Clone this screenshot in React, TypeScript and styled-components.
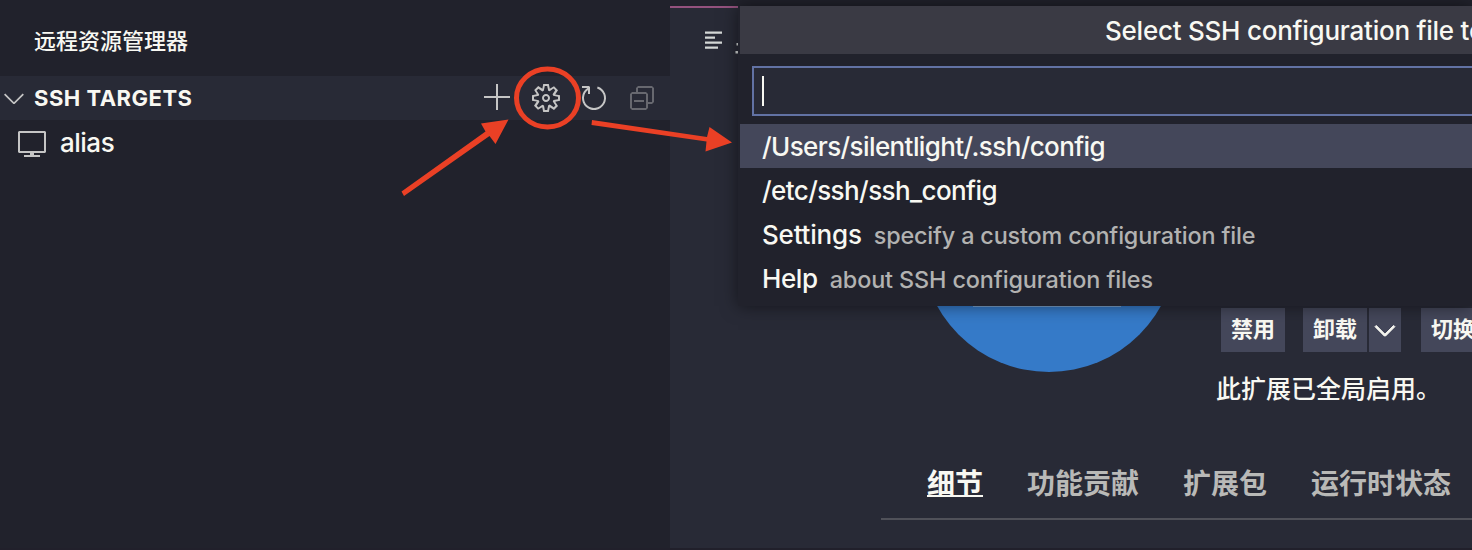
import React from "react";
import styled, { createGlobalStyle } from "styled-components";
import { VscAdd, VscGear, VscRefresh, VscCollapseAll, VscChevronDown, VscVm } from "react-icons/vsc";

const GlobalStyle = createGlobalStyle`
  * { box-sizing: border-box; }
  body {
    margin: 0;
    overflow: hidden;
    background: #282a36;
    color: #f8f8f2;
    font-family: Inter, "Noto Sans CJK SC", sans-serif;
    font-size: 26px;
    font-weight: 450;
  }
`;

const Window = styled.div`
  position: relative;
  display: flex;
  width: 1472px;
  height: 550px;
  overflow: hidden;
  border-bottom: 2px solid #21202b;
`;

const Sidebar = styled.aside`
  display: flex;
  flex-direction: column;
  flex: 0 0 670px;
  background: #21222c;
`;

const ViewTitle = styled.div`
  height: 76px;
  padding: 6px 0 0 34px;
  font-size: 22px;
  font-weight: 500;
  line-height: 70px;
`;

const SectionHeader = styled.div`
  display: flex;
  align-items: center;
  height: 44px;
  padding-right: 12px;
  background: #282a36;
`;

const Twistie = styled.span`
  display: flex;
  margin-left: -2px;
  width: 36px;
  color: #c5c5c5;
`;

const SectionTitle = styled.span`
  flex: 1;
  font-size: 22px;
  font-weight: 700;
  letter-spacing: 0.5px;
`;

const Actions = styled.div`
  display: flex;
  gap: 16px;
  color: #c5c5c5;
`;

const Action = styled.span<{ $dim?: boolean }>`
  display: flex;
  opacity: ${(p) => (p.$dim ? 0.4 : 1)};
`;

const TreeRow = styled.div`
  display: flex;
  align-items: center;
  gap: 12px;
  height: 44px;
  padding: 1px 0 0 16px;
  color: #f8f8f2;
  svg { color: #c5c5c5; }
`;

const Label = styled.span<{ $spacing?: number }>`
  letter-spacing: ${(p) => p.$spacing ?? 0}px;
  white-space: pre;
`;

const Editor = styled.main`
  display: flex;
  flex-direction: column;
  flex: 1;
  min-width: 0;
`;

const TabBar = styled.div`
  height: 116px;
  border-top: 6px solid #21222c;
`;

const ActiveTab = styled.div`
  height: 76px;
  border-top: 2px solid #94527e;
  padding: 22px 0 0 34px;
`;

const Extension = styled.section`
  display: flex;
  height: 318px;
  padding-left: 251px;
`;

const Logo = styled.div`
  display: flex;
  flex-shrink: 0;
  justify-content: center;
  width: 256px;
  height: 256px;
  border-radius: 50%;
  background: #357ac8;
`;

const LogoMark = styled.div`
  width: 148px;
  height: 191px;
  margin-right: 4px;
  border-bottom: 1px solid #7ba3cf;
`;

const Info = styled.div`
  display: flex;
  flex-direction: column;
  flex: 1;
  min-width: 0;
  padding-top: 192px;
  margin-left: 39px;
`;

const Buttons = styled.div`
  display: flex;
  padding-left: 5px;
`;

const Button = styled.div<{ $width: number; $gap?: number }>`
  flex: 0 0 ${(p) => p.$width}px;
  padding-left: 10px;
  height: 44px;
  margin-right: ${(p) => p.$gap ?? 0}px;
  background: #44475a;
  font-size: 22px;
  font-weight: 700;
  line-height: 43px;
  white-space: nowrap;
`;

const DropButton = styled(Button)`
  display: flex;
  align-items: center;
  justify-content: center;
  padding: 0;
`;

const Status = styled.div`
  margin-top: 17px;
  font-size: 25px;
  font-weight: 500;
  line-height: 40px;
  white-space: nowrap;
`;

const NavBar = styled.nav`
  display: flex;
  gap: 44px;
  height: 86px;
  margin-left: 211px;
  padding: 29px 0 0 46px;
  border-bottom: 2px solid #505159;
`;

const NavItem = styled.span<{ $active?: boolean }>`
  height: 36px;
  font-size: 28px;
  font-weight: 700;
  line-height: 42px;
  white-space: nowrap;
  color: ${(p) => (p.$active ? "#f8f8f2" : "#b9b9b7")};
  text-decoration: ${(p) => (p.$active ? "underline" : "none")};
  text-decoration-thickness: 2px;
  text-underline-offset: 1px;
  text-decoration-skip-ink: none;
`;

const Palette = styled.div`
  position: absolute;
  left: 738px;
  top: 6px;
  width: 734px;
  height: 300px;
  padding-left: 2px;
  background: #21222c;
  box-shadow: 0 0 16px rgba(0, 0, 0, 0.5);
`;

const PaletteTitle = styled.div`
  height: 48px;
  padding-left: 365px;
  overflow: hidden;
  background: #3a3a44;
  line-height: 50px;
  white-space: nowrap;
`;

const PaletteInput = styled.div`
  height: 50px;
  margin: 12px 0 8px 12px;
  padding: 8px;
  border: 2px solid #6272a4;
  border-right: 0;
  background: #282a36;
`;

const Caret = styled.div`
  width: 2px;
  height: 30px;
  background: #f8f8f2;
`;

const Option = styled.div<{ $selected?: boolean }>`
  display: flex;
  align-items: baseline;
  gap: 12px;
  height: 44px;
  padding-left: 22px;
  line-height: 46px;
  background: ${(p) => (p.$selected ? "#44475a" : "transparent")};
`;

const Detail = styled(Label)`
  font-size: 23.4px;
  color: #b2b2b1;
`;

const Annotations = styled.svg`
  position: absolute;
  left: 0;
  top: 0;
`;

export default function App() {
  return (
    <Window>
      <GlobalStyle />
      <Sidebar>
        <ViewTitle>远程资源管理器</ViewTitle>
        <SectionHeader>
          <Twistie><VscChevronDown size={32} /></Twistie>
          <SectionTitle>SSH TARGETS</SectionTitle>
          <Actions>
            <Action><VscAdd size={32} /></Action>
            <Action><VscGear size={32} /></Action>
            <Action><VscRefresh size={32} /></Action>
            <Action $dim><VscCollapseAll size={32} /></Action>
          </Actions>
        </SectionHeader>
        <TreeRow>
          <VscVm size={32} />
          <Label $spacing={-0.5}>alias</Label>
        </TreeRow>
      </Sidebar>
      <Editor>
        <TabBar>
          <ActiveTab>
            <svg width="36" height="26" viewBox="0 0 36 26" fill="#d4d7d6">
              <path d="M1 1.500h17v2.200H1zM1 6.500h10v2.200H1zM1 11.500h17v2.200H1zM1 16.500h13v2.200H1z" />
              <path d="M32.500 13h3v2.500h-3zM31.500 21h4v2.500h-4z" />
            </svg>
          </ActiveTab>
        </TabBar>
        <Extension>
          <Logo><LogoMark /></Logo>
          <Info>
            <Buttons>
              <Button $width={64} $gap={18}>禁用</Button>
              <Button $width={64} $gap={2}>卸载</Button>
              <DropButton $width={32} $gap={20}><VscChevronDown size={32} stroke="#f8f8f2" strokeWidth={0.5} /></DropButton>
              <Button $width={100}>切换</Button>
            </Buttons>
            <Status>此扩展已全局启用。</Status>
          </Info>
        </Extension>
        <NavBar>
          <NavItem $active>细节</NavItem>
          <NavItem>功能贡献</NavItem>
          <NavItem>扩展包</NavItem>
          <NavItem>运行时状态</NavItem>
        </NavBar>
      </Editor>
      <Palette>
        <PaletteTitle><Label $spacing={-0.24}>Select SSH configuration file to</Label></PaletteTitle>
        <PaletteInput><Caret /></PaletteInput>
        <Option $selected><Label $spacing={-0.6}>/Users/silentlight/.ssh/config</Label></Option>
        <Option><Label $spacing={-0.58}>/etc/ssh/ssh_config</Label></Option>
        <Option><Label $spacing={-0.2}>Settings</Label><Detail $spacing={-0.17}>specify a custom configuration file</Detail></Option>
        <Option><Label $spacing={-0.4}>Help</Label><Detail $spacing={-0.12}>about SSH configuration files</Detail></Option>
      </Palette>
      <Annotations width="1472" height="550" fill="#ea4025">
        <ellipse cx="547.5" cy="98" rx="31" ry="29" fill="none" stroke="#ea4025" strokeWidth="5" />
        <path d="M401.500 191.500L485.500 131.500L481 123.500L508.500 119.500L495.500 144L489.500 136L404 196Z" />
        <path d="M592 120L707 137L709.500 127L732 142.500L705.500 151.500L706.500 141.500L591.500 125Z" />
      </Annotations>
    </Window>
  );
}
